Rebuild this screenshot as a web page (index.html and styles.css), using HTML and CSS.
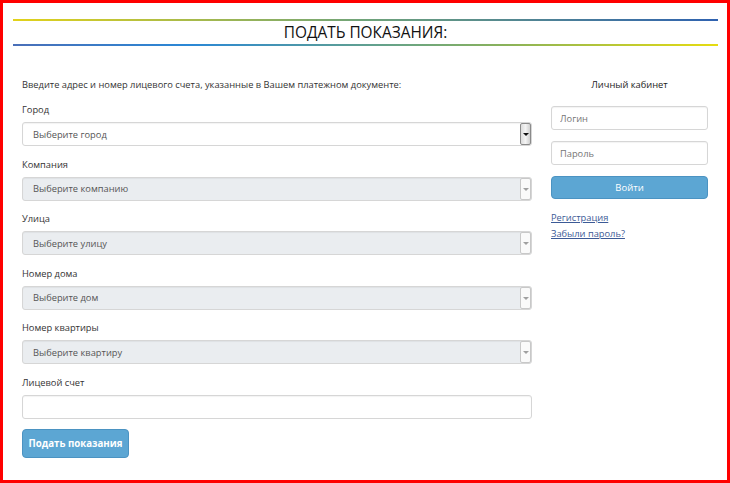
FILE: index.html
```html
<!DOCTYPE html>
<html lang="ru">
<head>
    <meta charset="UTF-8">
    <title>Подать показания</title>
    <link rel="stylesheet" href="styles.css">
</head>
<body>
    <div class="frame">
        <div class="page-title">
            <h1>ПОДАТЬ ПОКАЗАНИЯ:</h1>
        </div>

        <div class="content">
            <form class="readings-form">
                <p class="intro">Введите адрес и номер лицевого счета, указанные в Вашем платежном документе:</p>

                <div class="field">
                    <label for="city">Город</label>
                    <div class="select-wrap">
                        <select id="city"><option>Выберите город</option></select>
                        <span class="arrow"></span>
                    </div>
                </div>
                <div class="field">
                    <label for="company">Компания</label>
                    <div class="select-wrap disabled">
                        <select id="company" disabled><option>Выберите компанию</option></select>
                        <span class="arrow"></span>
                    </div>
                </div>
                <div class="field">
                    <label for="street">Улица</label>
                    <div class="select-wrap disabled">
                        <select id="street" disabled><option>Выберите улицу</option></select>
                        <span class="arrow"></span>
                    </div>
                </div>
                <div class="field">
                    <label for="house">Номер дома</label>
                    <div class="select-wrap disabled">
                        <select id="house" disabled><option>Выберите дом</option></select>
                        <span class="arrow"></span>
                    </div>
                </div>
                <div class="field">
                    <label for="flat">Номер квартиры</label>
                    <div class="select-wrap disabled">
                        <select id="flat" disabled><option>Выберите квартиру</option></select>
                        <span class="arrow"></span>
                    </div>
                </div>
                <div class="field">
                    <label for="account">Лицевой счет</label>
                    <input type="text" id="account">
                </div>

                <button type="submit" class="submit-btn">Подать показания</button>
            </form>

            <aside class="cabinet">
                <h3>Личный кабинет</h3>
                <input type="text" placeholder="Логин">
                <input type="password" placeholder="Пароль">
                <button type="button" class="login-btn">Войти</button>
                <div class="links">
                    <a href="#">Регистрация</a>
                    <a href="#">Забыли пароль?</a>
                </div>
            </aside>
        </div>
    </div>
</body>
</html>
```

FILE: styles.css
```css
* {
    margin: 0;
    padding: 0;
    box-sizing: border-box;
    font-family: 'Open Sans', 'DejaVu Sans', sans-serif;
}

body {
    color: #333;
    background: #fff;
}

.frame {
    width: 730px;
    height: 483px;
    border: 3px solid #ff0000;
    overflow: hidden;
}

.page-title {
    margin: 16px 9px 0 10px;
}

.page-title::before,
.page-title::after {
    content: "";
    display: block;
    height: 2px;
}

.page-title::before {
    background: linear-gradient(90deg, #e2d21a, #6fa37a 50%, #2f62b0);
}

.page-title::after {
    background: linear-gradient(90deg, #4a6fb8, #2a88d6 25%, #8ab25a 70%, #e6dc10);
}

.page-title h1 {
    font-size: 15.4px;
    font-weight: normal;
    color: #111;
    text-align: center;
    line-height: 23px;
}

.content {
    display: flex;
    gap: 19px;
    padding: 31px 0 0 19px;
}

.readings-form {
    width: 510px;
}

.intro {
    font-size: 9.3px;
    line-height: 16px;
    margin-bottom: 9px;
}

.field {
    margin-bottom: 10.5px;
}

.field label {
    display: block;
    font-size: 9.3px;
    line-height: 16px;
    margin-bottom: 4px;
}

.select-wrap {
    position: relative;
}

select,
input {
    display: block;
    width: 100%;
    height: 24px;
    border: 1px solid #d6d6d6;
    border-radius: 3px;
    background: #fff;
    box-shadow: inset 0 1px 1px rgba(0, 0, 0, 0.05);
    font-size: 9.3px;
    color: #555;
    padding: 0 10px;
    outline: none;
}

select {
    appearance: none;
    -webkit-appearance: none;
}

.select-wrap.disabled select {
    background: #eaedf0;
    opacity: 1;
    color: #555;
}

.arrow {
    position: absolute;
    top: 1px;
    right: 1px;
    width: 11px;
    height: 22px;
    border: 1px solid #8a8a8a;
    border-radius: 2px;
    background: linear-gradient(90deg, #dcdcdc, #f4f4f4 50%, #d0d0d0);
}

.arrow::after {
    content: "";
    position: absolute;
    left: 2px;
    top: 9px;
    border-left: 3px solid transparent;
    border-right: 3px solid transparent;
    border-top: 3px solid #111;
}

.select-wrap.disabled .arrow {
    border-color: #c8c8c8;
    background: #fafafa;
}

.select-wrap.disabled .arrow::after {
    border-top-color: #a0a0a0;
}

.submit-btn,
.login-btn {
    background: #5ca6d3;
    border: 1px solid #4b93c2;
    border-radius: 4px;
    color: #fff;
    cursor: pointer;
}

.submit-btn {
    width: 107px;
    height: 29px;
    font-size: 9.7px;
    font-weight: bold;
}

.cabinet {
    width: 157px;
    display: flex;
    flex-direction: column;
}

.cabinet h3 {
    font-size: 9.3px;
    font-weight: normal;
    line-height: 16px;
    text-align: center;
    color: #222;
    margin-bottom: 13px;
}

.cabinet input {
    padding: 0 8px;
    margin-bottom: 11px;
}

.login-btn {
    height: 23px;
    font-size: 9.5px;
    margin-bottom: 11px;
}

.links a {
    display: block;
    font-size: 9.3px;
    line-height: 16px;
    color: #3c5a96;
    text-decoration: underline;
}
```
